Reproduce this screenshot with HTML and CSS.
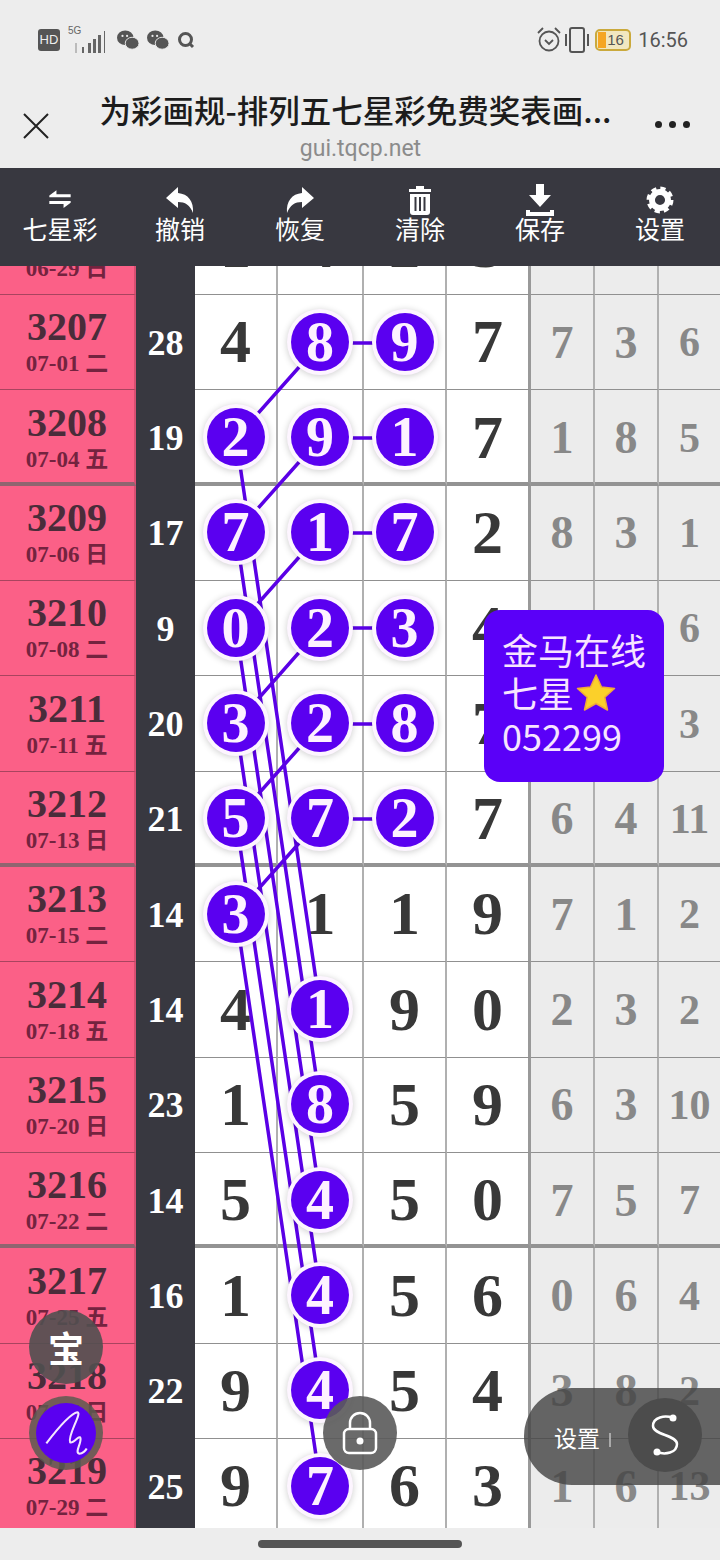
FILE: index.html
```html
<!DOCTYPE html>
<html lang="zh-CN">
<head>
    <meta charset="UTF-8">
    <meta name="viewport" content="width=device-width, initial-scale=1.0">
    <title>为彩画规</title>
    <link rel="stylesheet" href="styles.css">
</head>
<body>
    <div class="status-bar">
        <div class="status-left">
            <span class="hd">HD</span>
            <span class="net">
                <span class="net-label">5G</span>
                <svg width="34" height="22" viewBox="0 0 34 22" class="net-bars"><path d="M11 16h2v6h-2zM17 12h3v10h-3zM22 8h3v14h-3zM27 4h3v18h-3zM33 0h1v22h-1z" fill="#666"/><path d="M4 12h2v10H4z" fill="#bbb"/></svg>
            </span>
            <svg class="chat" width="22" height="21" viewBox="0 0 24 22"><ellipse cx="9" cy="8" rx="9" ry="8" fill="#555"/><ellipse cx="16.5" cy="14" rx="7.5" ry="6.5" fill="#555" stroke="#ededed"/><circle cx="6" cy="6" r="1.2" fill="#ededed"/><circle cx="11" cy="6" r="1.2" fill="#ededed"/></svg>
            <svg class="chat" width="22" height="21" viewBox="0 0 24 22"><ellipse cx="9" cy="8" rx="9" ry="8" fill="#555"/><ellipse cx="16.5" cy="14" rx="7.5" ry="6.5" fill="#555" stroke="#ededed"/><circle cx="6" cy="6" r="1.2" fill="#ededed"/><circle cx="11" cy="6" r="1.2" fill="#ededed"/></svg>
            <svg width="18" height="18" viewBox="0 0 18 18"><circle cx="8.5" cy="8.5" r="6" fill="none" stroke="#555" stroke-width="3"/><path d="M12 12l4 4" stroke="#555" stroke-width="3"/></svg>
        </div>
        <div class="status-right">
            <svg width="24" height="28" viewBox="0 0 24 28"><circle cx="12" cy="15" r="9.5" fill="none" stroke="#555" stroke-width="1.8"/><path d="M8 14l4 4 4-4M1 7l5-5M23 7l-5-5" fill="none" stroke="#555" stroke-width="1.8"/></svg>
            <svg width="24" height="26" viewBox="0 0 24 26"><rect x="5" y="1" width="14" height="24" rx="2" fill="none" stroke="#555" stroke-width="2"/><path d="M1 7v12M23 7v12" stroke="#555" stroke-width="2"/></svg>
            <span class="battery"><span class="battery-fill"></span><span class="battery-num">16</span></span>
            <span class="clock">16:56</span>
        </div>
    </div>

    <div class="nav-bar">
        <svg class="nav-close" width="28" height="28" viewBox="0 0 28 28"><path d="M2 2l24 24M26 2L2 26" stroke="#222" stroke-width="2"/></svg>
        <div class="nav-title">
            <div class="title-main">为彩画规-排列五七星彩免费奖表画...</div>
            <div class="title-sub">gui.tqcp.net</div>
        </div>
        <div class="nav-more"><i></i><i></i><i></i></div>
    </div>

    <div class="toolbar">
        <div class="tool">
            <svg width="32" height="32" viewBox="-2 -2 36 36"><path d="M4 11l8-6v4.500h16V13H4zM28 19l-8 6v-4.500H4V17h24z" fill="#fff"/></svg>
            <span>七星彩</span>
        </div>
        <div class="tool">
            <svg width="32" height="32" viewBox="0 0 32 32"><path d="M14 3L2 14l12 10v-6c7 0 12 3 15 11 1-12-5-19-15-20z" fill="#fff"/></svg>
            <span>撤销</span>
        </div>
        <div class="tool">
            <svg width="32" height="32" viewBox="0 0 32 32"><path d="M18 3l12 11-12 10v-6c-7 0-12 3-15 11-1-12 5-19 15-20z" fill="#fff"/></svg>
            <span>恢复</span>
        </div>
        <div class="tool">
            <svg width="32" height="32" viewBox="0 0 32 32"><path d="M5 5h7V2h8v3h7v3H5z" fill="#fff"/><path d="M6 10h20v18a3 3 0 0 1-3 3H9a3 3 0 0 1-3-3z" fill="#fff"/><path d="M11.500 13v14M16 13v14M20.500 13v14" stroke="#383840" stroke-width="2"/></svg>
            <span>清除</span>
        </div>
        <div class="tool">
            <svg width="32" height="32" viewBox="0 0 32 32"><path d="M12 0h8v11h7L16 23 5 11h7z" fill="#fff"/><path d="M2 26h4v2h20v-2h4v6H2z" fill="#fff"/></svg>
            <span>保存</span>
        </div>
        <div class="tool">
            <svg width="32" height="32" viewBox="-3 -3 38 38"><circle cx="16" cy="16" r="9.500" fill="none" stroke="#fff" stroke-width="7"/><circle cx="16" cy="16" r="13.500" fill="none" stroke="#fff" stroke-width="5" stroke-dasharray="6 4.600"/></svg>
            <span>设置</span>
        </div>
    </div>

    <div class="board">
        <div class="rows">
            <div class="row">
                <div class="issue"><b>3206</b><small>06-29 日</small></div><div class="sum"></div>
                <div class="num">1</div><div class="num">4</div><div class="num">2</div><div class="num">3</div>
                <div class="gray"></div><div class="gray"></div><div class="gray"></div>
            </div>
            <div class="row">
                <div class="issue"><b>3207</b><small>07-01 二</small></div><div class="sum">28</div>
                <div class="num">4</div><div class="num"><span class="ball">8</span></div><div class="num"><span class="ball">9</span></div><div class="num">7</div>
                <div class="gray">7</div><div class="gray">3</div><div class="gray">6</div>
            </div>
            <div class="row thick">
                <div class="issue"><b>3208</b><small>07-04 五</small></div><div class="sum">19</div>
                <div class="num"><span class="ball">2</span></div><div class="num"><span class="ball">9</span></div><div class="num"><span class="ball">1</span></div><div class="num">7</div>
                <div class="gray">1</div><div class="gray">8</div><div class="gray">5</div>
            </div>
            <div class="row">
                <div class="issue"><b>3209</b><small>07-06 日</small></div><div class="sum">17</div>
                <div class="num"><span class="ball">7</span></div><div class="num"><span class="ball">1</span></div><div class="num"><span class="ball">7</span></div><div class="num">2</div>
                <div class="gray">8</div><div class="gray">3</div><div class="gray">1</div>
            </div>
            <div class="row">
                <div class="issue"><b>3210</b><small>07-08 二</small></div><div class="sum">9</div>
                <div class="num"><span class="ball">0</span></div><div class="num"><span class="ball">2</span></div><div class="num"><span class="ball">3</span></div><div class="num">4</div>
                <div class="gray"></div><div class="gray"></div><div class="gray">6</div>
            </div>
            <div class="row">
                <div class="issue"><b>3211</b><small>07-11 五</small></div><div class="sum">20</div>
                <div class="num"><span class="ball">3</span></div><div class="num"><span class="ball">2</span></div><div class="num"><span class="ball">8</span></div><div class="num">7</div>
                <div class="gray"></div><div class="gray"></div><div class="gray">3</div>
            </div>
            <div class="row thick">
                <div class="issue"><b>3212</b><small>07-13 日</small></div><div class="sum">21</div>
                <div class="num"><span class="ball">5</span></div><div class="num"><span class="ball">7</span></div><div class="num"><span class="ball">2</span></div><div class="num">7</div>
                <div class="gray">6</div><div class="gray">4</div><div class="gray">11</div>
            </div>
            <div class="row">
                <div class="issue"><b>3213</b><small>07-15 二</small></div><div class="sum">14</div>
                <div class="num"><span class="ball">3</span></div><div class="num">1</div><div class="num">1</div><div class="num">9</div>
                <div class="gray">7</div><div class="gray">1</div><div class="gray">2</div>
            </div>
            <div class="row">
                <div class="issue"><b>3214</b><small>07-18 五</small></div><div class="sum">14</div>
                <div class="num">4</div><div class="num"><span class="ball">1</span></div><div class="num">9</div><div class="num">0</div>
                <div class="gray">2</div><div class="gray">3</div><div class="gray">2</div>
            </div>
            <div class="row">
                <div class="issue"><b>3215</b><small>07-20 日</small></div><div class="sum">23</div>
                <div class="num">1</div><div class="num"><span class="ball">8</span></div><div class="num">5</div><div class="num">9</div>
                <div class="gray">6</div><div class="gray">3</div><div class="gray">10</div>
            </div>
            <div class="row thick">
                <div class="issue"><b>3216</b><small>07-22 二</small></div><div class="sum">14</div>
                <div class="num">5</div><div class="num"><span class="ball">4</span></div><div class="num">5</div><div class="num">0</div>
                <div class="gray">7</div><div class="gray">5</div><div class="gray">7</div>
            </div>
            <div class="row">
                <div class="issue"><b>3217</b><small>07-25 五</small></div><div class="sum">16</div>
                <div class="num">1</div><div class="num"><span class="ball">4</span></div><div class="num">5</div><div class="num">6</div>
                <div class="gray">0</div><div class="gray">6</div><div class="gray">4</div>
            </div>
            <div class="row">
                <div class="issue"><b>3218</b><small>07-27 日</small></div><div class="sum">22</div>
                <div class="num">9</div><div class="num"><span class="ball">4</span></div><div class="num">5</div><div class="num">4</div>
                <div class="gray">3</div><div class="gray">8</div><div class="gray">2</div>
            </div>
            <div class="row">
                <div class="issue"><b>3219</b><small>07-29 二</small></div><div class="sum">25</div>
                <div class="num">9</div><div class="num"><span class="ball">7</span></div><div class="num">6</div><div class="num">3</div>
                <div class="gray">1</div><div class="gray">6</div><div class="gray">13</div>
            </div>
        </div>

        <!-- draw lines between the balls, coords are relative to the board -->
        <svg class="lines" width="720" height="1262" viewBox="0 0 720 1262">
            <g stroke="#5a00e6" stroke-width="3.500" fill="none">
                <path d="M320.500 77H405M320.500 172H405M320.500 267H405M320.500 362H405M320.500 458H405M320.500 553H405"/>
                <path d="M320.500 77L236 172M320.500 172L236 267M320.500 267L236 362M320.500 362L236 458M320.500 458L236 553M320.500 553L236 648"/>
                <path d="M236 172L320.500 744M236 267L320.500 839M236 362L320.500 934M236 458L320.500 1029M236 553L320.500 1125M236 648L320.500 1220"/>
            </g>
        </svg>
    </div>

    <div class="bottom-bar"><div class="handle"></div></div>

    <div class="promo">
        <div>金马在线</div>
        <div class="promo-star">七星<svg width="40" height="40" viewBox="0 0 40 40"><path d="M20 2l5.500 12 13 1.500-9.700 8.800L31.500 37 20 30.500 8.500 37l2.700-12.700L1.500 15.500l13-1.500z" fill="#fbd02a" stroke="#f0a83a" stroke-width="1.500" stroke-linejoin="round"/></svg></div>
        <div>052299</div>
    </div>

    <div class="float-btn float-bao">宝</div>
    <div class="float-btn float-pen">
        <svg width="60" height="60" viewBox="8 8 58 58"><circle cx="37" cy="37" r="29" fill="#5a00f0"/><path d="M18 47C28 34 42 18 48 17C53 17 38 40 41 46C44 48 50 38 51 42C52 47 45 56 50 57C53 57 56 54 57 52" fill="none" stroke="#f4e6ff" stroke-width="2"/></svg>
    </div>
    <div class="float-btn float-lock">
        <svg width="36" height="44" viewBox="0 0 36 44"><path d="M8 19v-7a10 10 0 0 1 20 0v7" fill="none" stroke="#fff" stroke-width="2.500"/><rect x="2" y="18" width="32" height="24" rx="5" fill="none" stroke="#fff" stroke-width="2.500"/><circle cx="18" cy="30" r="3.500" fill="#fff"/></svg>
    </div>
    <div class="settings-pill">
        <span class="settings-text">设置</span><span class="settings-bar"></span>
        <div class="settings-circle">
            <svg width="44" height="50" viewBox="-22 -25 44 50"><path d="M8 -17C0 -20 -12 -18 -12 -9C-12 0 12 0 12 9C12 18 0 20 -8 17" fill="none" stroke="#fff" stroke-width="2.500"/><circle cx="8" cy="-17" r="3.500" fill="#fff"/><circle cx="-8" cy="17" r="3.500" fill="#fff"/></svg>
        </div>
    </div>
</body>
</html>
```

FILE: styles.css
```css
* {
    box-sizing: border-box;
}
body {
    position: relative;
    width: 720px;
    height: 1560px;
    margin: 0;
    overflow: hidden;
    background: #ededed;
    font-family: "Noto Sans CJK SC", "Noto Sans", sans-serif;
}

/* Status bar */
.status-bar {
    height: 80px;
    padding: 0 32px 0 38px;
    display: flex;
    justify-content: space-between;
    align-items: center;
}
.status-left,
.status-right {
    display: flex;
    align-items: center;
}
.status-left {
    gap: 8px;
}
.status-right {
    gap: 4px;
}
.hd {
    width: 22px;
    height: 22px;
    border-radius: 3px;
    background: #555;
    color: #eee;
    font: 13px/22px "Liberation Sans", sans-serif;
    text-align: center;
}
.net {
    position: relative;
    width: 39px;
    height: 26px;
    margin-right: 2px;
}
.net-label {
    position: absolute;
    top: -2px;
    left: 0;
    font: 10px/12px "Liberation Sans", sans-serif;
    color: #666;
}
.net-bars {
    position: absolute;
    right: 2px;
    bottom: 0;
}
.battery {
    position: relative;
    width: 36px;
    height: 22px;
    border: 2px solid #caa93c;
    border-radius: 5px;
    background: #f1e7c0;
    margin-left: 2px;
}
.battery-fill {
    position: absolute;
    top: 1px;
    bottom: 1px;
    left: 1px;
    width: 8px;
    background: #f5a623;
}
.battery-num {
    position: absolute;
    left: 10px;
    top: 0;
    font: 15px/18px "Liberation Sans", sans-serif;
    color: #555;
}
.clock {
    margin-left: 3px;
    font: 20px/24px "Roboto", sans-serif;
    color: #555;
}

/* Title bar */
.nav-bar {
    height: 88px;
    padding: 0 30px 0 22px;
    display: flex;
    align-items: flex-start;
}
.nav-close {
    margin-top: 32px;
}
.nav-title {
    flex: 1;
    min-width: 0;
    text-align: center;
    padding-top: 7px;
}
.title-main {
    height: 44px;
    margin-right: -6px;
    font-size: 31.5px;
    line-height: 44px;
    font-weight: 500;
    color: #1c1c1c;
    white-space: nowrap;
}
.title-sub {
    margin-top: 3px;
    margin-left: 16px;
    font: 23px/30px "Roboto", sans-serif;
    color: #8b8b8b;
}
.nav-more {
    display: flex;
    gap: 7px;
    margin-top: 41px;
}
.nav-more i {
    width: 7px;
    height: 7px;
    border-radius: 50%;
    background: #222;
}

/* Toolbar */
.toolbar {
    height: 98px;
    display: grid;
    grid-template-columns: repeat(6, 120px);
    background: #383840;
    color: #fff;
}
.tool {
    padding-top: 16px;
    display: flex;
    flex-direction: column;
    align-items: center;
}
.tool span {
    margin-top: -6px;
    font-size: 25px;
    line-height: 36px;
}

/* Chart */
.board {
    position: relative;
    height: 1262px;
    overflow: hidden;
}
.rows {
    margin-top: -66.2px;
}
.row {
    display: grid;
    grid-template-columns: 136px 59px 83px 86px 83px 84px 64px 64px 61px;
    height: 95.33px;
}
.issue {
    display: flex;
    flex-direction: column;
    align-items: center;
    justify-content: center;
    background: #fb6087;
    border-right: 2px solid #d94f72;
    border-bottom: 1px solid #a8445f;
    color: #4a2c3a;
    font-family: "Liberation Serif", "Noto Sans CJK SC", serif;
}
.issue b {
    font-size: 40px;
    line-height: 44px;
}
.issue small {
    font-size: 23px;
    line-height: 30px;
    font-weight: bold;
    color: #74233f;
}
.sum {
    display: flex;
    align-items: center;
    justify-content: center;
    background: #383840;
    color: #fff;
    font: bold 36px "Liberation Serif", serif;
}
.num,
.gray {
    display: flex;
    align-items: center;
    justify-content: center;
    font-family: "Liberation Serif", serif;
    font-weight: bold;
    border-right: 2px solid #b0b0b0;
    border-bottom: 1px solid #909090;
}
.num {
    padding-bottom: 1px;
    background: #fff;
    color: #383838;
    font-size: 62px;
}
.num:nth-child(6) {
    border-right: 3px solid #999;
}
.gray {
    background: #ececec;
    color: #888;
    font-size: 46px;
}
.gray:last-child {
    border-right: 0;
    font-size: 42px;
}
.thick .issue {
    padding-top: 3px;
    border-bottom: 4px solid #8f6570;
}
.thick .num,
.thick .gray {
    padding-top: 3px;
    border-bottom: 4px solid #939393;
}
.ball {
    position: relative;
    z-index: 2;
    width: 58px;
    height: 58px;
    flex: none;
    border-radius: 50%;
    background: #5a00f0;
    color: #fdf2ff;
    font-size: 56px;
    line-height: 58px;
    text-align: center;
    box-shadow: 0 0 0 4px #fdf5ff, 0 1px 7px 4px rgba(0, 0, 0, 0.2);
}
.lines {
    position: absolute;
    top: 0;
    left: 0;
    z-index: 1;
}

/* Bottom */
.bottom-bar {
    height: 32px;
    padding-top: 12px;
    display: flex;
    justify-content: center;
    align-items: flex-start;
}
.handle {
    width: 204px;
    height: 8px;
    border-radius: 4px;
    background: #555;
}

/* Things floating over the chart */
.promo {
    position: absolute;
    z-index: 5;
    top: 610px;
    left: 484px;
    width: 180px;
    height: 172px;
    padding: 18px 0 0 18px;
    border-radius: 16px;
    background: #5a00f8;
    color: #f7e4ff;
    font-size: 36px;
    line-height: 43px;
}
.promo-star {
    display: flex;
    align-items: center;
}
.promo-star svg {
    margin-left: 2px;
}
.float-btn {
    position: absolute;
    z-index: 6;
    width: 74px;
    height: 74px;
    border-radius: 50%;
    display: flex;
    align-items: center;
    justify-content: center;
}
.float-bao {
    top: 1310px;
    left: 29px;
    background: rgba(80, 80, 80, 0.9);
    color: #fff;
    font-size: 36px;
    font-weight: bold;
}
.float-pen {
    top: 1396px;
    left: 29px;
    background: rgba(90, 90, 80, 0.85);
}
.float-lock {
    top: 1396px;
    left: 323px;
    background: rgba(90, 90, 90, 0.9);
}
.settings-pill {
    position: absolute;
    z-index: 6;
    top: 1388px;
    left: 524px;
    width: 196px;
    height: 97px;
    padding-left: 30px;
    border-radius: 48px 0 0 48px;
    background: rgba(70, 70, 70, 0.82);
    display: flex;
    align-items: center;
    color: #fff;
}
.settings-text {
    font-size: 23px;
}
.settings-bar {
    width: 2px;
    height: 14px;
    margin: 6px 0 0 9px;
    background: #aaa;
}
.settings-circle {
    position: absolute;
    top: 10px;
    left: 104px;
    width: 74px;
    height: 74px;
    border-radius: 50%;
    background: #4c4c4c;
    display: flex;
    align-items: center;
    justify-content: center;
}
```
